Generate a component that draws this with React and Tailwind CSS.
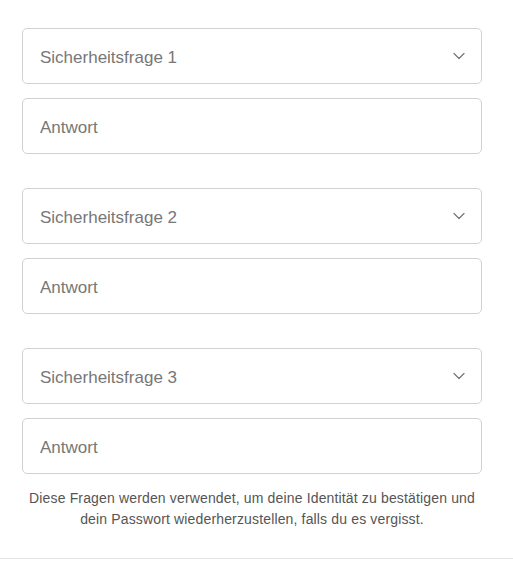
import React from 'react';

const Chevron = () => (
  <svg width="12" height="8" viewBox="0 0 12 8" fill="none" className="shrink-0">
    <path d="M1 1.5 L6 6.5 L11 1.5" stroke="#777" strokeWidth="1.3" strokeLinecap="round" strokeLinejoin="round" />
  </svg>
);

const SelectBox = ({ label }) => (
  <div className="h-14 w-full rounded-[5px] border border-[#d1d1d1] bg-white pl-[17px] pr-[16px] flex items-center justify-between">
    <span className="pt-[3px] text-[17px] text-[#777]">{label}</span>
    <Chevron />
  </div>
);

const AnswerBox = () => (
  <div className="h-14 w-full rounded-[5px] border border-[#d1d1d1] bg-white pl-[17px] flex items-center">
    <span className="pt-[3px] text-[17px] text-[#777]">Antwort</span>
  </div>
);

export default function App() {
  const questions = ['Sicherheitsfrage 1', 'Sicherheitsfrage 2', 'Sicherheitsfrage 3'];
  return (
    <div className="w-[513px] h-[561px] bg-white" style={{ fontFamily: '"Liberation Sans", Arial, sans-serif' }}>
      <div className="px-[22px] pt-[28px] w-[504px]">
        <div className="flex flex-col gap-[34px]">
          {questions.map((q) => (
            <div key={q} className="flex flex-col gap-[14px]">
              <SelectBox label={q} />
              <AnswerBox />
            </div>
          ))}
        </div>
        <p className="mt-[14px] text-center text-[14px] tracking-[0.15px] leading-[21px] text-[#555]">
          Diese Fragen werden verwendet, um deine Identität zu bestätigen und
          <br />
          dein Passwort wiederherzustellen, falls du es vergisst.
        </p>
      </div>
      <div className="mt-[28px] border-t border-[#e3e3e3]" />
    </div>
  );
}
